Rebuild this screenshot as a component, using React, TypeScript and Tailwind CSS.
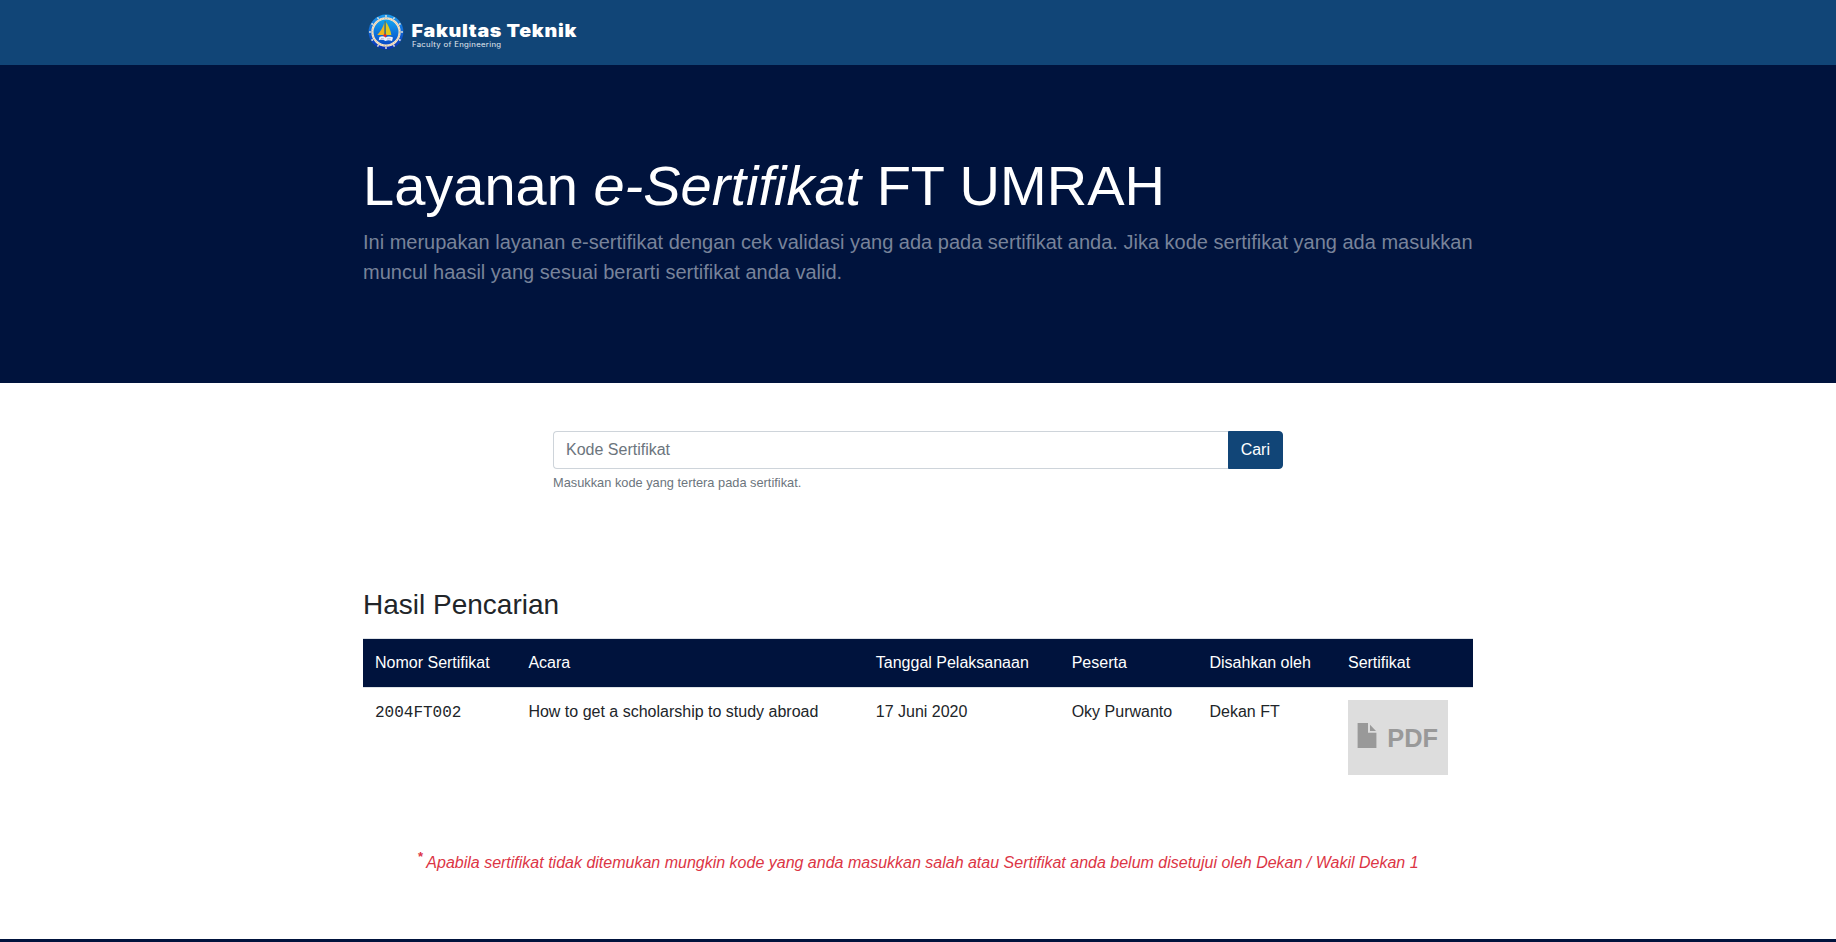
import React from "react";

function Emblem() {
  const bolts = Array.from({ length: 12 }, (_, i) => i * 30);
  return (
    <svg width="38" height="38" viewBox="0 0 38 38" className="shrink-0">
      <defs>
        <linearGradient id="ring" x1="0" y1="0" x2="0" y2="1">
          <stop offset="0" stopColor="#1d9cf0" />
          <stop offset="0.5" stopColor="#0f66d6" />
          <stop offset="1" stopColor="#0a2fb4" />
        </linearGradient>
        <linearGradient id="sea" x1="0" y1="0" x2="0" y2="1">
          <stop offset="0" stopColor="#12a8f2" />
          <stop offset="1" stopColor="#0b46c4" />
        </linearGradient>
      </defs>
      <circle cx="19" cy="19" r="17.4" fill="url(#ring)" />
      {bolts.map((a) => (
        <circle key={a} cx="19" cy="3" r="0.9" fill="#f4ead8" transform={`rotate(${a} 19 19)`} />
      ))}
      <circle cx="19" cy="19" r="13.6" fill="url(#sea)" stroke="#f3e4cb" strokeWidth="2.2" />
      <circle cx="19" cy="19" r="13.6" fill="none" stroke="#c9995f" strokeWidth="0.5" strokeDasharray="1.4 1.4" />
      <path d="M17.4 9.5 V22 H10.2 C13.6 18.6 16 14.4 17.4 9.5Z" fill="#f1b51c" />
      <path d="M18.8 9 C21.6 12.6 23.4 17 24.4 22 H18.8Z" fill="#e0c81e" />
      <path d="M18.1 8 V23" stroke="#7c5b16" strokeWidth="0.7" />
      <circle cx="18" cy="22.6" r="1.7" fill="#e8262b" />
      <path d="M12.4 24 C15 22.9 17 23.3 18.6 24.5 C20.6 23.1 23.4 23.2 26 24.6 L25 28 C22.6 27 20.4 27 18.5 28 C16.4 26.6 14.2 26.5 11.8 27.2Z" fill="#eef0fa" />
      <path d="M14 25.5 l3 .4 M20 26 l3.6 -.3" stroke="#8b8fc4" strokeWidth="0.6" />
    </svg>
  );
}

function Brand() {
  return (
    <a href="#" className="flex items-center" aria-label="Fakultas Teknik">
      <Emblem />
      <svg width="172" height="38" viewBox="0 0 172 38" className="ml-[6px] overflow-visible">
        <text x="0.6" y="24" fill="#fff" fontFamily="Inter, sans-serif" fontWeight="900" fontSize="17.8" letterSpacing="0.6" textLength="165.4" lengthAdjust="spacingAndGlyphs">
          Fakultas Teknik
        </text>
        <text x="1" y="34.2" fill="#e2eaf1" fontFamily="Inter, sans-serif" fontWeight="400" fontSize="7.3" letterSpacing="0.3" textLength="89.4" lengthAdjust="spacingAndGlyphs">
          Faculty of Engineering
        </text>
      </svg>
    </a>
  );
}

const columns = [
  { title: "Nomor Sertifikat", width: "w-[153.4px]" },
  { title: "Acara", width: "w-[347.4px]" },
  { title: "Tanggal Pelaksanaan", width: "w-[195.9px]" },
  { title: "Peserta", width: "w-[137.8px]" },
  { title: "Disahkan oleh", width: "w-[138.5px]" },
  { title: "Sertifikat", width: "w-[137px]" },
];

function PdfThumbnail() {
  return (
    <svg width="100" height="75" viewBox="0 0 100 75" className="block">
      <rect width="100" height="75" fill="#ddd" />
      <path d="M9.6 23 H20 V32.8 H28.4 V48 H9.6Z M22 24.8 L28 31 H22Z" fill="#999" />
      <text x="39.2" y="47.4" fill="#999" fontFamily="Liberation Sans, sans-serif" fontWeight="700" fontSize="26.5" textLength="50.8" lengthAdjust="spacingAndGlyphs">
        PDF
      </text>
    </svg>
  );
}

export default function App() {
  return (
    <div className="flex h-[942px] flex-col overflow-hidden bg-white font-['Liberation_Sans',Arial,sans-serif] text-base text-[#212529]">
      <header className="h-[65px] shrink-0 bg-[#114577]">
        <div className="mx-auto w-[1110px] pt-[13px] pl-1">
          <Brand />
        </div>
      </header>

      <section className="h-[318px] shrink-0 bg-[#00133d] pt-[87px]">
        <div className="mx-auto w-[1110px]">
          <h1 className="mb-2 text-[56px] leading-[67.2px] font-light text-white">
            Layanan <em>e-Sertifikat</em> FT UMRAH
          </h1>
          <p className="text-xl leading-[30px] font-light text-[#78839a]">
            Ini merupakan layanan e-sertifikat dengan cek validasi yang ada pada sertifikat anda. Jika kode sertifikat yang ada masukkan muncul haasil yang sesuai berarti sertifikat anda valid.
          </p>
        </div>
      </section>

      <form className="mx-auto mt-12 w-[730px]">
        <div className="flex h-[38px]">
          <input
            type="text"
            placeholder="Kode Sertifikat"
            className="min-w-0 flex-1 rounded-l border border-r-0 border-[#ced4da] px-3 py-1.5 leading-6 outline-none placeholder:text-[#6c757d] placeholder:opacity-100"
          />
          <button type="button" className="rounded-r border border-[#114577] bg-[#114577] px-3 py-1.5 leading-6 text-white">
            Cari
          </button>
        </div>
        <small className="mt-1 block text-[12.8px] leading-[19.2px] text-[#6c757d]">Masukkan kode yang tertera pada sertifikat.</small>
      </form>

      <main className="mx-auto mt-24 w-[1110px]">
        <h3 className="mb-4 text-[28px] leading-[33.6px]">Hasil Pencarian</h3>
        <table className="w-full table-fixed border-separate border-spacing-0 text-left">
          <thead className="text-white">
            <tr>
              {columns.map((c) => (
                <th key={c.title} className={`${c.width} border-t border-[#dee2e6] bg-[#00133d] bg-clip-padding p-3 leading-6 font-normal whitespace-nowrap`}>
                  {c.title}
                </th>
              ))}
            </tr>
          </thead>
          <tbody>
            <tr className="align-top leading-6 *:border-t *:border-[#dee2e6] *:p-3">
              <td>
                <span className="font-['Liberation_Mono',monospace]">2004FT002</span>
              </td>
              <td>How to get a scholarship to study abroad</td>
              <td>17 Juni 2020</td>
              <td>Oky Purwanto</td>
              <td>Dekan FT</td>
              <td>
                <PdfThumbnail />
              </td>
            </tr>
          </tbody>
        </table>
        <p className="mt-16 text-center leading-6 text-[#dc3545] italic">
          <sup className="text-[13px] font-bold">*</sup> Apabila sertifikat tidak ditemukan mungkin kode yang anda masukkan salah atau Sertifikat anda belum disetujui oleh Dekan / Wakil Dekan 1
        </p>
      </main>

      <footer className="mt-auto h-[3px] shrink-0 bg-[#00133d]" />
    </div>
  );
}
